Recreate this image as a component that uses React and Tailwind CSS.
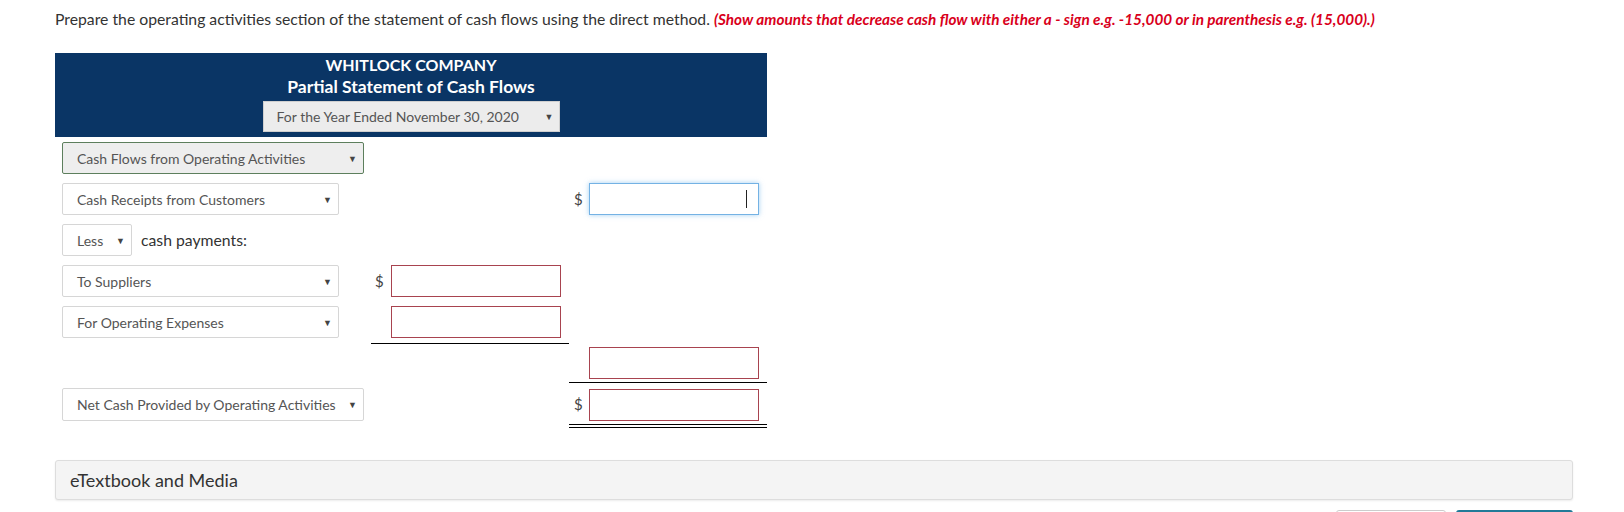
import clsx from "clsx";

const Arrow = () => <span className="text-[9px] leading-none text-[#444]">▼</span>;

const Select = ({ label, className }) => (
  <div
    className={clsx(
      "flex items-center justify-between h-[32px] rounded-[2px] border pl-[14px] pr-[6px] text-[14px] text-[#555]",
      className
    )}>
    <span>{label}</span>
    <Arrow />
  </div>
);

const Amount = ({ tone = "red", caret = false }) => (
  <div
    className={clsx(
      "relative w-[170px] h-[32px] bg-white border",
      tone === "blue"
        ? "border-[#74b2e4] shadow-[0_0_5px_rgba(102,175,233,0.6)]"
        : "border-[#a8434f]"
    )}>
    {caret && <div className="absolute right-[11px] top-[6px] w-px h-[18px] bg-[#222]" />}
  </div>
);

const Dollar = ({ className }) => (
  <span className={clsx("text-[15px] text-[#444]", className)}>$</span>
);

const Row = ({ left, mid, right }) => (
  <div className="flex h-[41px] items-start">
    <div className="w-[309px]">{left}</div>
    <div className="w-[198px]">{mid}</div>
    <div className="w-[198px]">{right}</div>
  </div>
);

export default function App() {
  return (
    <div className="h-[512px] bg-white pl-[55px] font-['Lato','Liberation_Sans',sans-serif] text-[#333] overflow-hidden">
      <p className="pt-[9px] h-[29px] text-[15.75px] leading-[20px] text-[#333] whitespace-nowrap">
        Prepare the operating activities section of the statement of cash flows using the direct method.{" "}
        <span className="font-bold italic text-[15.3px] text-[#d9001b]">
          (Show amounts that decrease cash flow with either a - sign e.g. -15,000 or in parenthesis e.g. (15,000).)
        </span>
      </p>

      <div className="mt-[24px] w-[712px] h-[84px] bg-[#0a3565] flex flex-col items-center pt-[1px]">
        <div className="text-white font-bold text-[16px] leading-[22px]">WHITLOCK COMPANY</div>
        <div className="text-white font-bold text-[17.5px] leading-[22px]">Partial Statement of Cash Flows</div>
        <div className="mt-[3px] w-[297px] h-[31px] bg-[#ececec] border border-[#cfcfcf] flex items-center justify-between pl-[13px] pr-[5px] text-[14px] text-[#555]">
          <span>For the Year Ended November 30, 2020</span>
          <Arrow />
        </div>
      </div>

      <div className="w-[712px] pl-[7px] mt-[5px]">
        <Row left={<Select label="Cash Flows from Operating Activities" className="w-[302px] bg-[#eeeeee] border-[#5d7f5d]" />} />
        <Row
          left={<Select label="Cash Receipts from Customers" className="w-[277px] bg-white border-[#d6d6d6]" />}
          right={
            <div className="flex items-center h-[32px]">
              <Dollar className="ml-[5px] w-[15px]" />
              <Amount tone="blue" caret />
            </div>
          }
        />
        <Row
          left={
            <div className="flex items-center">
              <Select label="Less" className="w-[70px] bg-white border-[#d6d6d6]" />
              <span className="ml-[9px] text-[15.75px] text-[#333]">cash payments:</span>
            </div>
          }
        />
        <Row
          left={<Select label="To Suppliers" className="w-[277px] bg-white border-[#d6d6d6]" />}
          mid={
            <div className="flex items-center h-[32px]">
              <Dollar className="ml-[4px] w-[16px]" />
              <Amount />
            </div>
          }
        />
        <Row
          left={<Select label="For Operating Expenses" className="w-[277px] bg-white border-[#d6d6d6]" />}
          mid={
            <div className="h-[38px] border-b border-black pl-[20px]">
              <Amount />
            </div>
          }
        />
        <Row
          right={
            <div className="h-[36px] border-b border-black pl-[20px]">
              <Amount />
            </div>
          }
        />
        <Row
          left={<Select label="Net Cash Provided by Operating Activities" className="w-[302px] h-[33px] bg-white border-[#d6d6d6]" />}
          right={
            <div>
              <div className="flex items-center h-[33px]">
                <Dollar className="ml-[5px] w-[15px]" />
                <Amount />
              </div>
              <div className="mt-[3px] h-px bg-black" />
              <div className="mt-[2px] h-px bg-black" />
            </div>
          }
        />
      </div>

      <div className="mt-[31px] w-[1518px] h-[40px] rounded-[3px] border border-[#dddddd] bg-[#f4f4f4] shadow-[0_1px_2px_rgba(0,0,0,0.08)] flex items-center pl-[14px] text-[18px] text-[#333]">
        eTextbook and Media
      </div>

      <div className="w-[1518px] flex justify-end gap-[10px] mt-[10px]">
        <div className="w-[110px] h-[30px] rounded-[3px] border border-[#cccccc] bg-white" />
        <div className="w-[117px] h-[30px] rounded-[3px] bg-[#217a98]" />
      </div>
    </div>
  );
}
